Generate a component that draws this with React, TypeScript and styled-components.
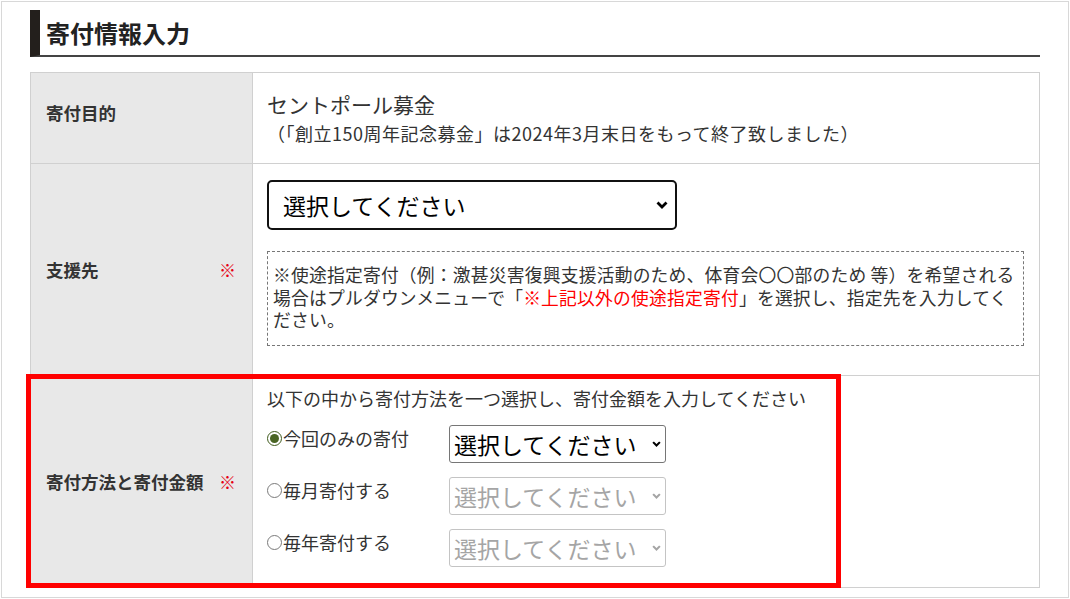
import React from 'react';
import styled, { createGlobalStyle } from 'styled-components';

const GlobalStyle = createGlobalStyle`
  body {
    margin: 0;
    background: #fff;
    font-family: "Noto Sans CJK JP", "Noto Sans", sans-serif;
    color: #333;
  }
`;

const Frame = styled.div`
  position: relative;
  box-sizing: border-box;
  width: 1068px;
  height: 597px;
  margin: 1px 0 0 1px;
  border: 1px solid #d8d8d8;
  padding: 8px 0 0 28px;
`;

const Heading = styled.h2`
  box-sizing: border-box;
  display: flex;
  align-items: center;
  width: 1010px;
  height: 47px;
  margin: 0;
  padding-left: 6px;
  border-left: 10px solid #231f1c;
  border-bottom: 2px solid #444;
  font-size: 24px;
  font-weight: 700;
  line-height: 1;
  color: #222;
`;

const Table = styled.div`
  box-sizing: border-box;
  width: 1010px;
  margin-top: 15px;
  border: 1px solid #d0d0d0;
  border-bottom: none;
`;

const Row = styled.div`
  display: grid;
  grid-template-columns: 222px 1fr;
  border-bottom: 1px solid #d0d0d0;
`;

const LabelCell = styled.div<{ $top?: boolean }>`
  box-sizing: border-box;
  display: flex;
  align-items: ${(p) => (p.$top ? 'flex-start' : 'center')};
  justify-content: space-between;
  padding: ${(p) => (p.$top ? '27px' : '0')} 16px 0 15px;
  background: #e8e8e8;
  border-right: 1px solid #d0d0d0;
  font-size: 17.5px;
  font-weight: 700;
  color: #333;
`;

const Required = styled.span`
  color: #e60012;
  font-size: 17px;
  font-weight: 400;
`;

const ValueCell = styled.div<{ $pad: string }>`
  padding: ${(p) => p.$pad};
  font-size: 18px;
  color: #333;
`;

const Title = styled.div`
  font-size: 21px;
  line-height: 30px;
`;

const Sub = styled.div`
  font-size: 18px;
  line-height: 28px;
  letter-spacing: 0.5px;
`;

const SelectWrap = styled.div<{ $w: number; $h: number }>`
  position: relative;
  width: ${(p) => p.$w}px;
  height: ${(p) => p.$h}px;
`;

const Select = styled.select<{ $big?: boolean }>`
  appearance: none;
  box-sizing: border-box;
  width: 100%;
  height: 100%;
  margin: 0;
  padding: 0 0 0 ${(p) => (p.$big ? '14px' : '4px')};
  background: #fff;
  border: ${(p) => (p.$big ? '2px solid #111' : '1px solid #767676')};
  border-radius: ${(p) => (p.$big ? '5px' : '3px')};
  font-family: "Noto Sans CJK JP", sans-serif;
  font-size: 23px;
  color: #000;

  &:disabled {
    border-color: #c4c4c4;
    color: #a5a5a5;
    opacity: 1;
  }
`;

const Chevron = styled.svg<{ $right: number }>`
  position: absolute;
  right: ${(p) => p.$right}px;
  top: 50%;
  transform: translateY(-50%);
  pointer-events: none;
`;

const Note = styled.div`
  box-sizing: border-box;
  margin-top: 21px;
  height: 95px;
  padding: 11px 5px 0 5px;
  border: 1px dashed #777;
  font-size: 17.8px;
  line-height: 22.5px;
  letter-spacing: 0.2px;
  color: #333;
`;

const NoteLine = styled.span`
  display: block;
  white-space: nowrap;
`;

const Red = styled.span`
  color: #ff0000;
`;

const Intro = styled.div`
  font-size: 18px;
  line-height: 24px;
`;

const Options = styled.div`
  display: flex;
  flex-direction: column;
  gap: 14px;
  margin-top: 15px;
`;

const Option = styled.div`
  display: flex;
  align-items: flex-start;
`;

const RadioLabel = styled.label`
  display: flex;
  align-items: center;
  width: 182px;
  height: 26px;
  font-size: 18px;
  line-height: 26px;
  color: #333;
`;

const Radio = styled.span<{ $on?: boolean }>`
  box-sizing: border-box;
  display: inline-flex;
  flex: none;
  align-items: center;
  justify-content: center;
  width: 15px;
  height: 15px;
  margin-right: 1px;
  border-radius: 50%;
  border: 1.5px solid ${(p) => (p.$on ? '#3f5a1c' : '#7a7a7a')};
  background: #fff;

  &::after {
    content: '';
    display: ${(p) => (p.$on ? 'block' : 'none')};
    width: 9px;
    height: 9px;
    border-radius: 50%;
    background: #4a6524;
  }
`;

const Highlight = styled.div`
  position: absolute;
  box-sizing: border-box;
  left: 24px;
  top: 372px;
  width: 815px;
  height: 214px;
  border: 5px solid #ff0000;
  pointer-events: none;
`;

const Dropdown = ({ w, h, big, disabled }: { w: number; h: number; big?: boolean; disabled?: boolean }) => (
  <SelectWrap $w={w} $h={h}>
    <Select $big={big} disabled={disabled} defaultValue="">
      <option value="">選択してください</option>
    </Select>
    <Chevron $right={big ? 9 : 5} width={big ? 12 : 9} height={big ? 8 : 6} viewBox="0 0 12 8">
      <path d="M1.5 1.5 L6 6 L10.5 1.5" fill="none" stroke={disabled ? '#a5a5a5' : '#000'} strokeWidth="2.8" />
    </Chevron>
  </SelectWrap>
);

const plans = [
  { label: '今回のみの寄付', on: true },
  { label: '毎月寄付する', on: false },
  { label: '毎年寄付する', on: false },
];

export default function App() {
  return (
    <>
      <GlobalStyle />
      <Frame>
        <Heading>寄付情報入力</Heading>
        <Table>
          <Row>
            <LabelCell $top>寄付目的</LabelCell>
            <ValueCell $pad="16px 15px 16px 14px">
              <Title>セントポール募金</Title>
              <Sub>（「創立150周年記念募金」は2024年3月末日をもって終了致しました）</Sub>
            </ValueCell>
          </Row>
          <Row>
            <LabelCell>
              支援先<Required>※</Required>
            </LabelCell>
            <ValueCell $pad="16px 15px 29px 14px">
              <Dropdown w={410} h={50} big />
              <Note>
                <NoteLine>※使途指定寄付（例：激甚災害復興支援活動のため、体育会〇〇部のため 等）を希望される</NoteLine>
                <NoteLine>
                  場合はプルダウンメニューで「<Red>※上記以外の使途指定寄付</Red>」を選択し、指定先を入力してく
                </NoteLine>
                <NoteLine>ださい。</NoteLine>
              </Note>
            </ValueCell>
          </Row>
          <Row>
            <LabelCell>
              寄付方法と寄付金額<Required>※</Required>
            </LabelCell>
            <ValueCell $pad="10px 15px 20px 14px">
              <Intro>以下の中から寄付方法を一つ選択し、寄付金額を入力してください</Intro>
              <Options>
                {plans.map((p) => (
                  <Option key={p.label}>
                    <RadioLabel>
                      <Radio $on={p.on} />
                      {p.label}
                    </RadioLabel>
                    <Dropdown w={217} h={38} disabled={!p.on} />
                  </Option>
                ))}
              </Options>
            </ValueCell>
          </Row>
        </Table>
        <Highlight />
      </Frame>
    </>
  );
}
